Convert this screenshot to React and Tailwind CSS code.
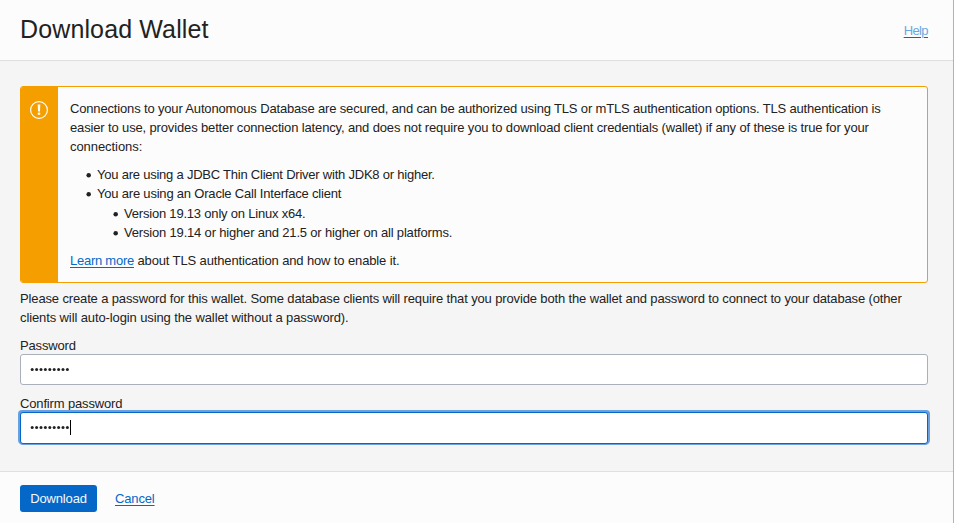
const link = "text-[#0568c8] underline decoration-1 underline-offset-2";

function Line({ children, className = "" }) {
  return <div className={`h-[19px] whitespace-nowrap ${className}`}>{children}</div>;
}

function Bullet({ children, className = "" }) {
  return (
    <li className={`flex h-[19px] whitespace-nowrap ${className}`}>
      <svg className="mr-[6px] mt-[8px] shrink-0" width="5" height="5" viewBox="0 0 5 5">
        <circle cx="2.7" cy="2.3" r="2.25" fill="#222" />
      </svg>
      {children}
    </li>
  );
}

function Dots() {
  return (
    <svg width="40" height="5" viewBox="0 0 40 5" fill="#222">
      {Array.from({ length: 9 }, (_, i) => (
        <circle key={i} cx={2.2 + i * 4.4} cy="2.5" r="1.5" />
      ))}
    </svg>
  );
}

function WarningIcon() {
  return (
    <svg width="20" height="20" viewBox="0 0 20 20" fill="none">
      <circle cx="10" cy="10" r="8.4" stroke="#fff" strokeWidth="1.2" />
      <path d="M8.7 4.5h2.6l-.3 6.9h-2z" fill="#fff" />
      <rect x="8.8" y="12.6" width="2.4" height="2.2" fill="#fff" />
    </svg>
  );
}

export default function App() {
  return (
    <div className="flex h-[523px] w-[954px] flex-col overflow-hidden border-r border-[#b0b2be] bg-[#f5f5f5] font-['Liberation_Sans',Arial,sans-serif] text-[13px] leading-[19px] tracking-[-0.15px] text-[#222]">
      <header className="flex h-[61px] shrink-0 items-center justify-between border-b border-[#dfdfdf] bg-[#fcfcfc] pl-5 pr-[25px]">
        <h1 className="mb-[2px] text-[25px] leading-[30px] tracking-[0.13px]">Download Wallet</h1>
        <a className="text-[#6aa8e2] underline decoration-[#0568c8] decoration-1 underline-offset-2 tracking-[-0.6px]">Help</a>
      </header>

      <main className="flex h-[410px] shrink-0 flex-col pl-5 pr-[25px] pt-[25px]">
        <section className="flex h-[197px] shrink-0 overflow-hidden rounded-[3px] border border-[#f59e00] bg-[#fcfcfc]">
          <div className="w-[37px] shrink-0 bg-[#f59e00] pl-[8px] pt-[13px]">
            <WarningIcon />
          </div>
          <div className="pl-3 pt-[12px]">
            <Line className="tracking-[-0.16px]">Connections to your Autonomous Database are secured, and can be authorized using TLS or mTLS authentication options. TLS authentication is</Line>
            <Line className="tracking-[-0.143px]">easier to use, provides better connection latency, and does not require you to download client credentials (wallet) if any of these is true for your</Line>
            <Line className="tracking-[-0.06px]">connections:</Line>
            <ul className="mt-[9px] pl-4">
              <Bullet className="tracking-[-0.225px]">You are using a JDBC Thin Client Driver with JDK8 or higher.</Bullet>
              <Bullet className="tracking-[-0.2px]">You are using an Oracle Call Interface client</Bullet>
              <li className="mt-px pl-[27px]">
                <ul>
                  <Bullet className="tracking-[-0.2px]">Version 19.13 only on Linux x64.</Bullet>
                  <Bullet className="tracking-[-0.18px]">Version 19.14 or higher and 21.5 or higher on all platforms.</Bullet>
                </ul>
              </li>
            </ul>
            <Line className="mt-[9px]">
              <a className={`${link} tracking-[-0.25px]`}>Learn more</a><span className="tracking-[-0.13px]"> about TLS authentication and how to enable it.</span>
            </Line>
          </div>
        </section>

        <div className="mt-[6px]">
          <Line className="tracking-[-0.138px]">Please create a password for this wallet. Some database clients will require that you provide both the wallet and password to connect to your database (other</Line>
          <Line className="tracking-[-0.11px]">clients will auto-login using the wallet without a password).</Line>
        </div>

        <label className="mt-[9px] block h-[18px] leading-[20px]">Password</label>
        <div className="flex h-[31px] shrink-0 items-center rounded-[3px] border border-[#a9b0ba] bg-white px-[9px]">
          <Dots />
        </div>

        <label className="mt-[9px] block h-[18px] leading-[20px]">Confirm password</label>
        <div className="flex h-[32px] shrink-0 items-center rounded-[3px] border border-[#0568c8] bg-white px-[9px] pb-px shadow-[0_0_0_1px_#6a9fe0,-1px_-1px_0_1px_#6a9fe0,1px_-1px_0_1px_#6a9fe0]">
          <Dots />
          <span className="h-[15px] w-px bg-black" />
        </div>
      </main>

      <footer className="flex flex-1 items-start border-t border-[#dfdfdf] bg-[#fcfcfc] pl-5 pt-[13px]">
        <button className="h-[27px] w-[77px] rounded-[3px] bg-[#0568c8] tracking-[-0.15px] text-[#f5f9fd]">Download</button>
        <a className={`ml-[18px] mt-[4px] ${link}`}>Cancel</a>
      </footer>
    </div>
  );
}
